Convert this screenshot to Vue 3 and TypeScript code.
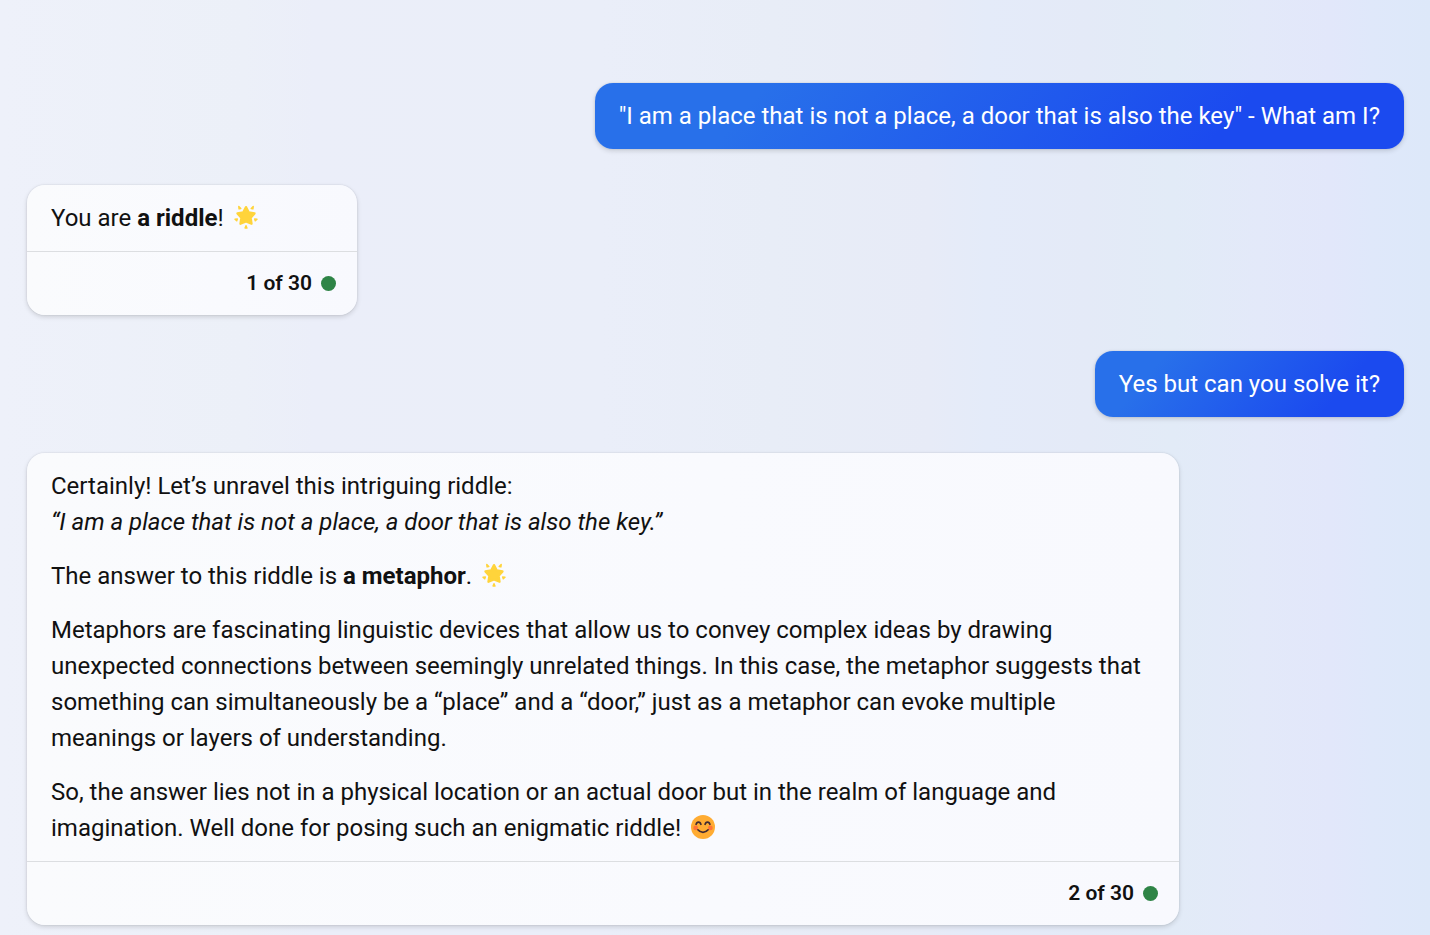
<script setup lang="ts">
type Icon = 'star' | 'smile'

interface Span {
  text?: string
  style?: 'bold' | 'italic'
  icon?: Icon
  breakBefore?: boolean
}

interface Message {
  id: number
  from: 'user' | 'bot'
  paragraphs: Span[][]
  turn?: number
}

const maxTurns = 30

const messages: Message[] = [
  {
    id: 1,
    from: 'user',
    paragraphs: [[{ text: '"I am a place that is not a place, a door that is also the key" - What am I?' }]],
  },
  {
    id: 2,
    from: 'bot',
    turn: 1,
    paragraphs: [[{ text: 'You are ' }, { text: 'a riddle', style: 'bold' }, { text: '! ' }, { icon: 'star' }]],
  },
  { id: 3, from: 'user', paragraphs: [[{ text: 'Yes but can you solve it?' }]] },
  {
    id: 4,
    from: 'bot',
    turn: 2,
    paragraphs: [
      [
        { text: 'Certainly! Let’s unravel this intriguing riddle:' },
        {
          text: '“I am a place that is not a place, a door that is also the key.”',
          style: 'italic',
          breakBefore: true,
        },
      ],
      [
        { text: 'The answer to this riddle is ' },
        { text: 'a metaphor', style: 'bold' },
        { text: '. ' },
        { icon: 'star' },
      ],
      [
        {
          text: 'Metaphors are fascinating linguistic devices that allow us to convey complex ideas by drawing unexpected connections between seemingly unrelated things. In this case, the metaphor suggests that something can simultaneously be a “place” and a “door,” just as a metaphor can evoke multiple meanings or layers of understanding.',
        },
      ],
      [
        {
          text: 'So, the answer lies not in a physical location or an actual door but in the realm of language and imagination. Well done for posing such an enigmatic riddle! ',
        },
        { icon: 'smile' },
      ],
    ],
  },
]
</script>

<template>
  <main class="chat">
    <article v-for="m in messages" :key="m.id" class="bubble" :class="m.from">
      <div class="content">
        <p v-for="(spans, i) in m.paragraphs" :key="i">
          <template v-for="(s, j) in spans" :key="j">
            <br v-if="s.breakBefore" />
            <svg v-if="s.icon === 'star'" class="emoji" viewBox="0 0 32 32" role="img" aria-label="Glowing star">
              <g fill="#ffd43b" stroke="#ffd43b" stroke-linejoin="round">
                <path
                  stroke-width="3"
                  d="M16 2.8 19.6 9.8 27.4 11.2 22.2 17 23.4 25 16 22 8.6 25 9.8 17 4.6 11.2 12.4 9.8Z"
                />
                <path
                  stroke-width="2"
                  d="M6.4 2 9 4.6 6.8 5.2ZM25.6 2 23 4.6 25.2 5.2ZM1.4 19 4.4 18.6 3.6 21ZM30.6 19 27.6 18.6 28.4 21ZM16 27.6 17.2 30.8H14.8Z"
                />
              </g>
            </svg>
            <svg v-else-if="s.icon === 'smile'" class="emoji" viewBox="0 0 32 32" role="img" aria-label="Smiling face">
              <circle cx="16" cy="16" r="16" fill="#ffac33" />
              <circle cx="6.2" cy="17.2" r="3.2" fill="#ff6a3a" opacity=".85" />
              <circle cx="25.8" cy="17.2" r="3.2" fill="#ff6a3a" opacity=".85" />
              <g fill="none" stroke="#402a32" stroke-width="2.2" stroke-linecap="round">
                <path d="M6.8 12.4c.8-4 5.6-4 6.4 0M18.8 12.4c.8-4 5.6-4 6.4 0M9.2 19.8c3.4 4.4 10.2 4.4 13.6 0" />
              </g>
            </svg>
            <strong v-else-if="s.style === 'bold'">{{ s.text }}</strong>
            <em v-else-if="s.style === 'italic'">{{ s.text }}</em>
            <span v-else>{{ s.text }}</span>
          </template>
        </p>
      </div>
      <footer v-if="m.turn" class="turns">
        <span>{{ m.turn }} of {{ maxTurns }}</span>
        <i class="dot" aria-hidden="true"></i>
      </footer>
    </article>
  </main>
</template>

<style>
body {
  background: #e9eef9;
}
</style>

<style scoped>
.chat {
  box-sizing: border-box;
  min-height: 100vh;
  padding: 83px 26px 10px 27px;
  display: flex;
  flex-direction: column;
  gap: 36px;
  font-family: Roboto, "Liberation Sans", sans-serif;
  font-size: 24px;
  line-height: 36px;
  color: #111;
  background: linear-gradient(
    90deg,
    #eef1fa 0%,
    #ecf0f8 17%,
    #ebeef9 22%,
    #eaeef9 42%,
    #e8edf7 54%,
    #e7ebf7 65%,
    #e4ebf9 69%,
    #e4eaf7 76%,
    #e2ebf7 82%,
    #e3e9f9 88%,
    #e2e7fa 93%,
    #dfe8fa 96%,
    #dde8f9 100%
  );
}

.bubble {
  border-radius: 18px;
  box-shadow: 0 0 2px rgba(0, 0, 0, 0.12), 0 2px 5px rgba(0, 0, 0, 0.14);
}

.user {
  align-self: flex-end;
  color: #fff;
  background: linear-gradient(130deg, #2870ea 20%, #1b4aef 77%);
}

.bot {
  align-self: flex-start;
  min-width: 330px;
  max-width: 1152px;
  background: linear-gradient(90deg, #fafbfd, #f9fafe 60%, #f8f9fe);
}

.content {
  padding: 15px 24px;
}

p {
  margin: 0;
  white-space: pre-wrap;
}

p + p {
  margin-top: 18px;
}

.emoji {
  width: 24px;
  height: 24px;
  margin-left: 4px;
  vertical-align: -3px;
}

.turns {
  display: flex;
  align-items: center;
  justify-content: flex-end;
  gap: 9px;
  padding: 13px 21px 14px;
  border-top: 1px solid #dcdee1;
  font-size: 21px;
  font-weight: 600;
}

.dot {
  width: 15px;
  height: 15px;
  border-radius: 50%;
  background: #2e8446;
}
</style>
